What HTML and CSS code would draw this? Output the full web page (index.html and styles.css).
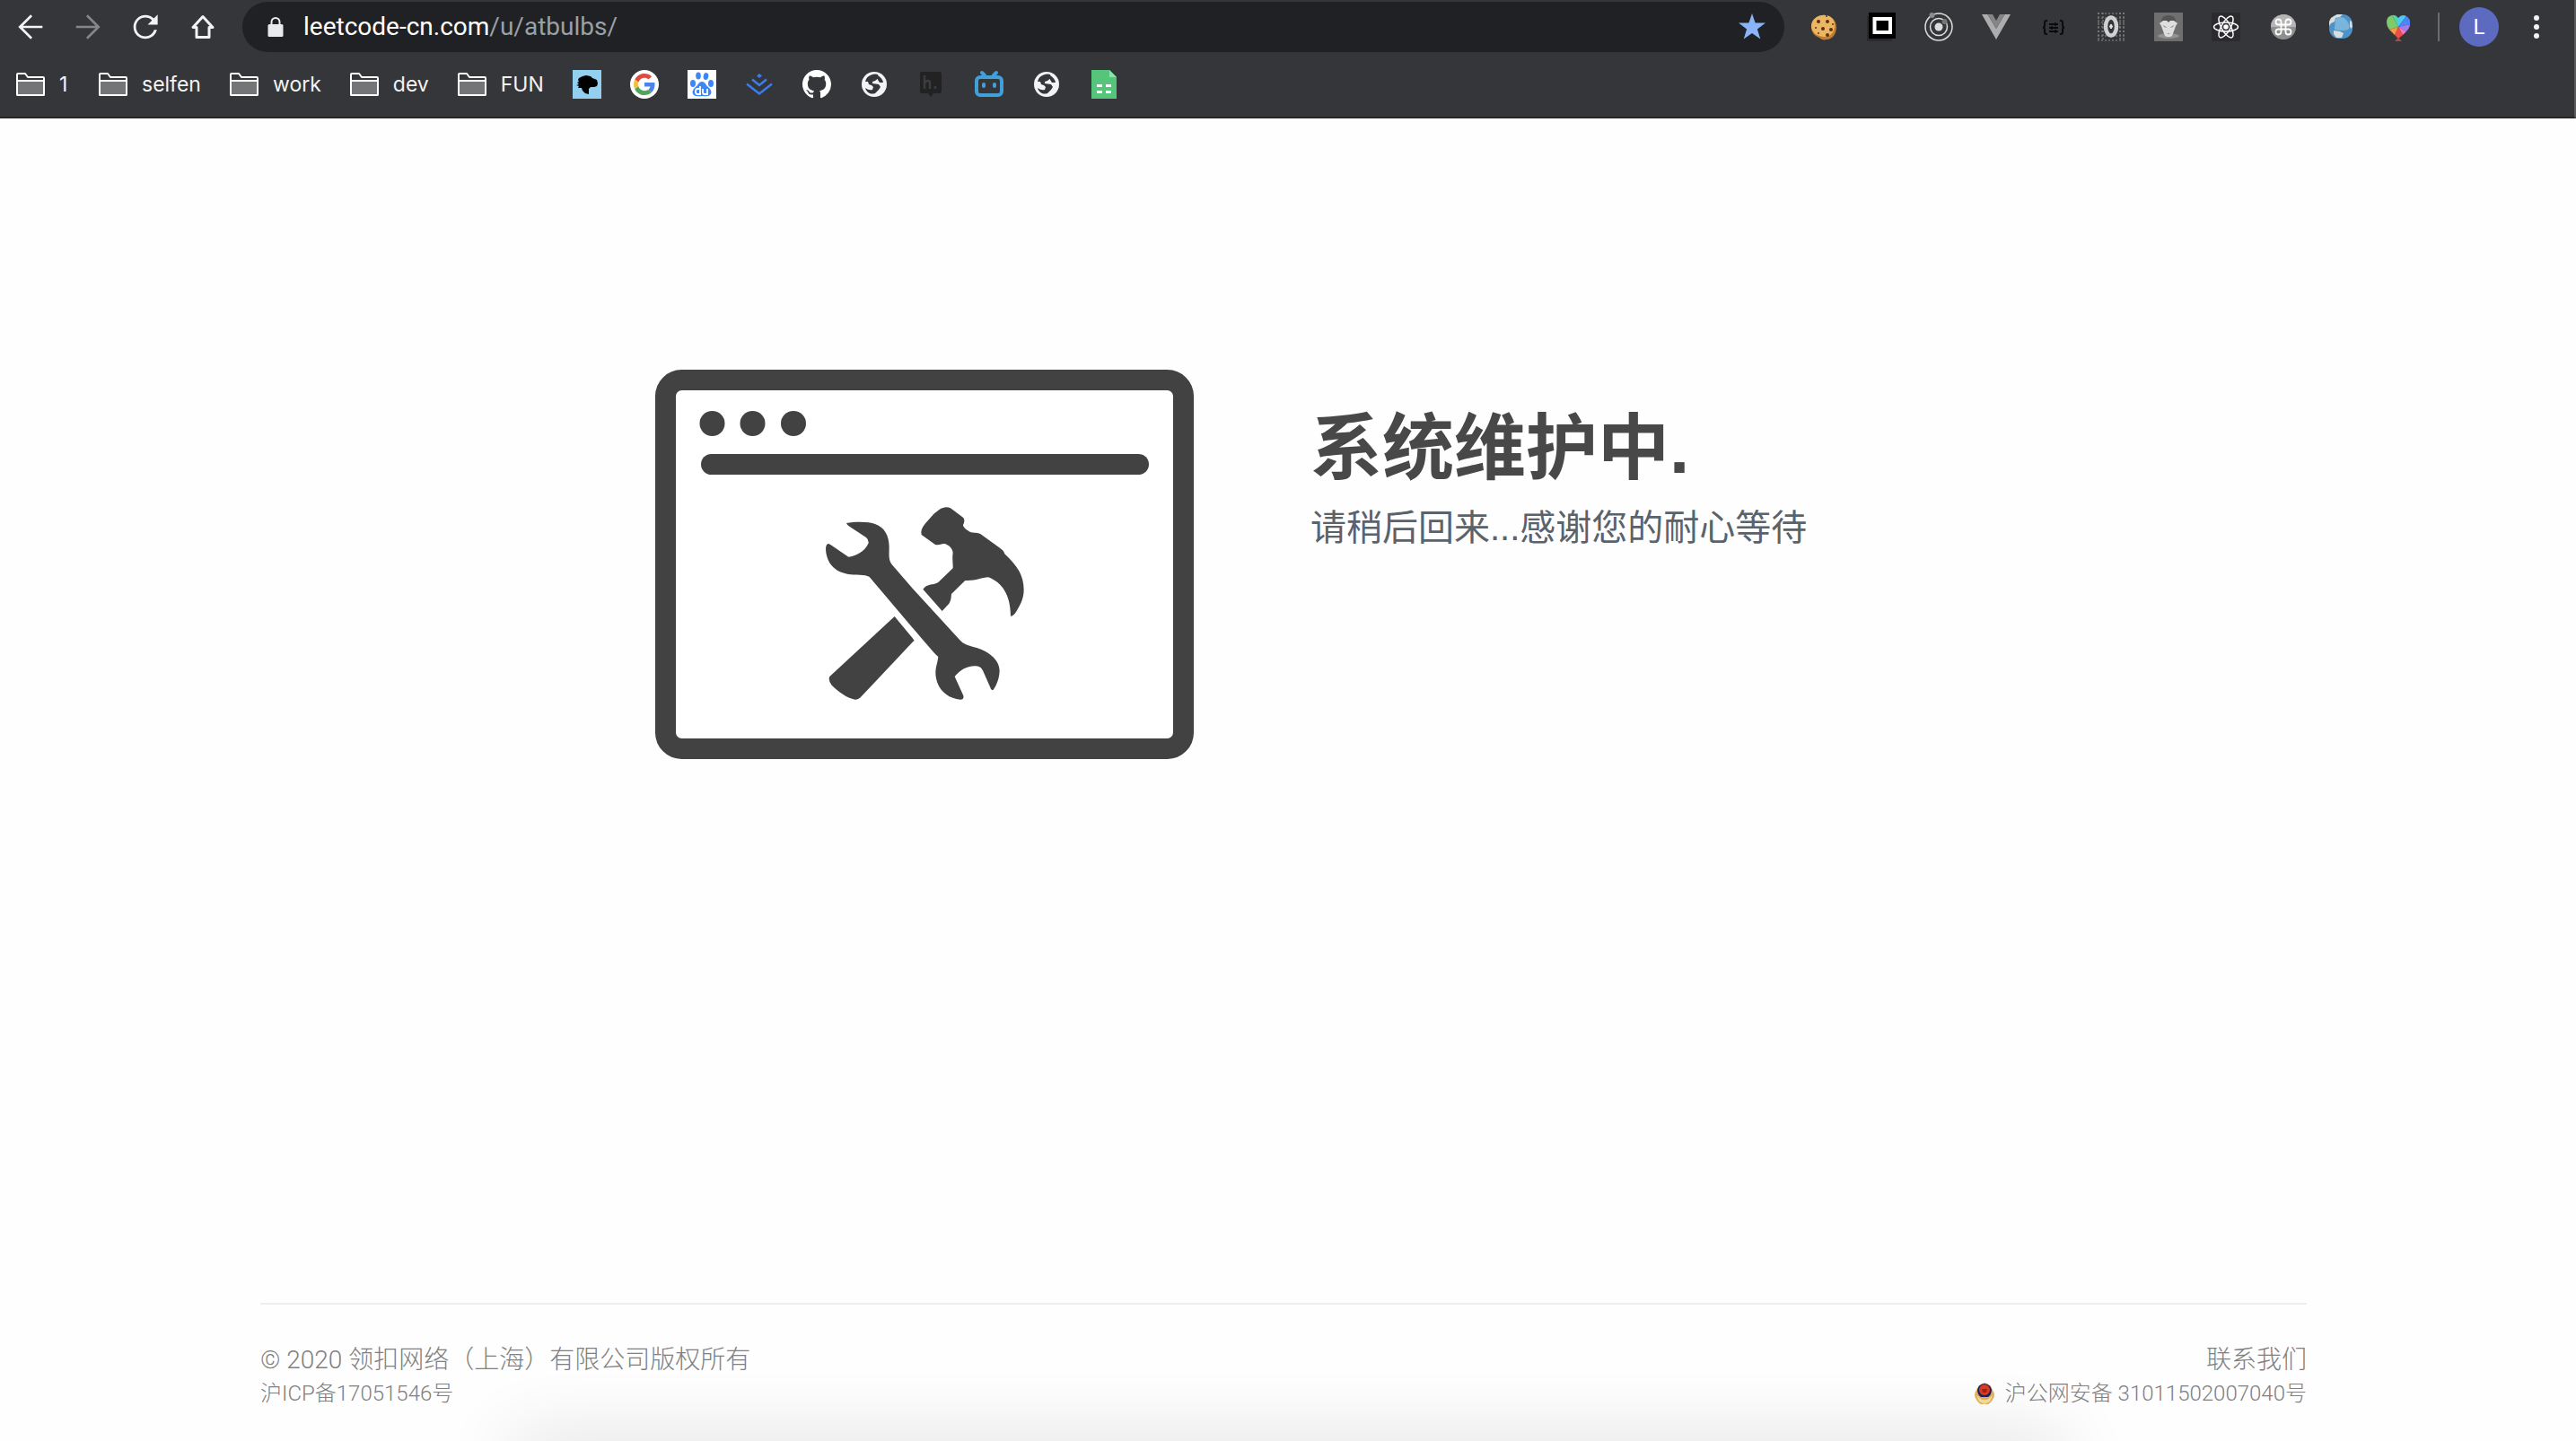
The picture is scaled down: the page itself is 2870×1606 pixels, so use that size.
FILE: index.html
```html
<!DOCTYPE html>
<html lang="zh-CN">
<head>
    <meta charset="utf-8">
    <title>系统维护中</title>
    <link rel="stylesheet" href="styles.css">
</head>
<body>
    <header class="browser">
        <div class="toolbar">
            <button class="nav-button" type="button" aria-label="Back">
                <svg viewBox="0 0 24 24"><path fill="#f1f3f4" d="M20 11.2H6.9l6.3-6.3L12.1 3.800l-8.300 8.200 8.300 8.200 1.100-1.100-6.300-6.300H20z"/></svg>
            </button>
            <button class="nav-button" type="button" aria-label="Forward" disabled>
                <svg viewBox="0 0 24 24"><path fill="#85868a" d="M4 11.200h13.100l-6.300-6.300 1.100-1.100 8.300 8.200-8.300 8.200-1.100-1.100 6.300-6.300H4z"/></svg>
            </button>
            <button class="nav-button" type="button" aria-label="Reload">
                <svg viewBox="0 0 24 24"><path fill="#f1f3f4" d="M17.650 6.350C16.200 4.900 14.210 4 12 4c-4.420 0-7.990 3.580-7.990 8s3.570 8 7.990 8c3.730 0 6.840-2.550 7.730-6h-1.900c-.820 2.500-3.100 4.300-5.830 4.300-3.500 0-6.300-2.800-6.300-6.300s2.800-6.300 6.300-6.300c1.700 0 3.300.7 4.400 1.900L13.500 10.500H20.200V3.800z"/></svg>
            </button>
            <button class="nav-button" type="button" aria-label="Home">
                <svg viewBox="0 0 40 40"><path fill="none" stroke="#f1f3f4" stroke-width="3" stroke-linejoin="round" d="M20 8.500 9 20.500h4V31.500h14V20.500h4z"/></svg>
            </button>

            <div class="address-bar">
                <svg class="lock" viewBox="0 0 18 24"><path fill="#e8eaed" d="M2 9h1.500V6.500a5.500 5.500 0 0 1 11 0V9H16a1.500 1.500 0 0 1 1.500 1.500v11A1.500 1.500 0 0 1 16 23H2a1.500 1.500 0 0 1-1.500-1.500v-11A1.500 1.500 0 0 1 2 9zm3.500 0h7V6.500a3.500 3.500 0 0 0-7 0z"/></svg>
                <div class="url" role="textbox" aria-label="Address" contenteditable="true" spellcheck="false">leetcode-cn.com<span class="url-path">/u/atbulbs/</span></div>
                <button class="star" type="button" aria-label="Bookmark this page">
                    <svg viewBox="0 0 32 32"><path fill="#8ab4f8" d="M16 1l3.600 10.400 11.400.2-9.100 7 3.400 10.800L16 23l-9.300 6.400 3.400-10.800-9.100-7 11.400-.2z"/></svg>
                </button>
            </div>

            <div class="extensions">
                <button class="icon" type="button" aria-label="Cookies">
                    <svg viewBox="0 0 32 32">
                        <path fill="#c87d2c" d="M15 3c8-1 15 5 15 13 0 7-4 14-11 14-3 1-6 0-8-2C5 26 2 21 2 16 2 9 7 3 15 3z"/>
                        <path fill="#ebb765" d="M14 3c8-1 14 4 14 11s-4 13-11 13C9 27 2 22 2 15 2 9 7 4 14 3z"/>
                        <g fill="#5b3212"><circle cx="10" cy="10" r="2"/><circle cx="20" cy="10" r="2"/><circle cx="15" cy="18" r="2"/><circle cx="24" cy="19" r="2"/><circle cx="20" cy="25" r="2"/><circle cx="7" cy="17" r="1"/><circle cx="10" cy="23" r="1"/><circle cx="26" cy="13" r="1"/><circle cx="19" cy="4" r="1"/></g>
                    </svg>
                </button>
                <button class="icon" type="button" aria-label="Frame">
                    <svg viewBox="0 0 32 32"><path fill="#292a2d" d="M0 4h28v28H0z"/><path d="M2 0h30v29H2z"/><path fill="none" stroke="#fff" stroke-width="4" d="M8.500 6h17.500v15H8.500z" transform="translate(0 1)"/></svg>
                </button>
                <button class="icon" type="button" aria-label="Orbit">
                    <svg viewBox="0 0 32 32"><g fill="none" stroke="#dcdcdc" stroke-width="1.500"><circle cx="16" cy="16" r="15"/><circle cx="16" cy="16" r="9.500"/></g><circle cx="16" cy="16" r="4.500" fill="#dcdcdc"/><circle cx="8.500" cy="3" r="3" fill="#8b8b8b"/><circle cx="22.500" cy="10" r="3" fill="#777"/></svg>
                </button>
                <button class="icon" type="button" aria-label="Vue devtools">
                    <svg viewBox="0 0 32 32"><path fill="#adadad" d="M0 2h6.500L16 18l9.500-16H32L16 30z"/><path fill="#858585" d="M6.500 2H12l4 7 4-7h5.500L16 18z"/></svg>
                </button>
                <button class="icon" type="button" aria-label="JSON viewer">
                    <svg viewBox="0 0 32 32"><path fill="none" stroke="#0b0b0b" stroke-width="2" d="M9 9H8q-2 0-2 2v3q0 2.500-2 2.500 2 0 2 2.500v3q0 2 2 2h1M23 9h1q2 0 2 2v3q0 2.500 2 2.500-2 0-2 2.500v3q0 2-2 2h-1M11 13h10M11 17h10M11 21h10"/><path stroke="#0b0b0b" stroke-width="1.500" d="M18 11v4M14 15v4M18 19v4"/></svg>
                </button>
                <button class="icon" type="button" aria-label="Octal">
                    <svg viewBox="0 0 32 32"><g fill="none" stroke="#8d8d8d" stroke-dasharray="2 2"><path d="M1 1h30M1 6h30M1 11h30M1 16h30M1 21h30M1 26h30M1 31h30"/><path d="M2 0v32M30 0v32M7 0v32M26 0v32"/></g><ellipse cx="16" cy="15.500" rx="6" ry="10" fill="#35363a" stroke="#d0d0d0" stroke-width="4.500"/><path stroke="#ddd" stroke-width="2" d="M14 15.500h4M16 13v5"/></svg>
                </button>
                <button class="icon" type="button" aria-label="Mask">
                    <svg viewBox="0 0 32 32"><path fill="#6f6f6f" d="M0 0h32v32H0z"/><ellipse cx="16" cy="26" rx="12" ry="3" fill="#929292"/><path fill="#555" d="M8 10q0-7 8-7t8 7z"/><path fill="#dedede" d="M6 12l4-3h4l2 2 2-2h4l4 3-2 3-1 3-3 8-2 1h-4l-2-1-3-8-1-3z"/><path fill="#888" d="M10 14l5 3-4-1zM22 14l-5 3 4-1zM14 23h4l-2 1z"/></svg>
                </button>
                <button class="icon" type="button" aria-label="React devtools">
                    <svg viewBox="0 0 32 32"><rect width="32" height="32" rx="2" fill="#2b2b2f"/><g fill="none" stroke="#fff" stroke-width="1.500"><ellipse cx="16" cy="16" rx="13.500" ry="5"/><ellipse cx="16" cy="16" rx="13.500" ry="5" transform="rotate(60 16 16)"/><ellipse cx="16" cy="16" rx="13.500" ry="5" transform="rotate(120 16 16)"/></g><circle cx="16" cy="16" r="2.800" fill="#fff"/></svg>
                </button>
                <button class="icon" type="button" aria-label="Shortcuts">
                    <svg viewBox="0 0 32 32"><circle cx="16" cy="16" r="14" fill="#8f8f8f"/><path fill="#b5b5b5" d="M2 16a14 14 0 0 1 28 0z"/><path fill="none" stroke="#fff" stroke-width="1.800" d="M13.500 13.500v-3a3 3 0 1 0-3 3h11a3 3 0 1 0-3-3v11a3 3 0 1 0 3-3h-11a3 3 0 1 0 3 3z"/></svg>
                </button>
                <button class="icon" type="button" aria-label="Globe">
                    <svg viewBox="0 0 32 32"><rect x="3" y="2" width="26" height="27" rx="11" fill="#4c94c8"/><path fill="#79b5dc" d="M10 7q9-5 14 4t-6 9-9-3z"/><path fill="#dcdcda" d="M5 6l7-4h6l-3 3-5 1-1 4-4 2-2 3v-5zM8 20l7 1 4 2-2 5h-6l-3-4zM26 9l2 1 1 6-2 2-1-3z"/></svg>
                </button>
                <button class="icon" type="button" aria-label="Colour heart">
                    <svg viewBox="0 0 32 32"><path fill="#7fcb6c" d="M16 16 9 3Q3 4 3 11q0 4 3 8z"/><path fill="#53d3a6" d="M16 16V6q-3-4-7-3z"/><path fill="#4fc8f4" d="M16 16V6q4-5 9-2z"/><path fill="#4a86f5" d="M16 16l9-12q5 3 4 9z"/><path fill="#a57bf0" d="M16 16l13-3q0 4-4 8z"/><path fill="#f178c5" d="M16 16l9 5-4 4z"/><path fill="#ef4d45" d="M16 16l5 9-5 4-4-4z"/><path fill="#f39a4b" d="M16 16l-4 9-6-6z"/><path fill="#b44a3f" d="M16 28l4 4h-8z"/></svg>
                </button>
            </div>

            <span class="divider"></span>
            <button class="avatar" type="button">L</button>
            <button class="nav-button" type="button" aria-label="Menu">
                <svg viewBox="0 0 40 40" fill="#f1f3f4"><circle cx="20" cy="10" r="3"/><circle cx="20" cy="20" r="3"/><circle cx="20" cy="30" r="3"/></svg>
            </button>
        </div>

        <svg class="symbols" aria-hidden="true">
            <symbol id="folder" viewBox="0 0 32 26"><path fill="#35363a" stroke="#fff" stroke-width="2" stroke-linejoin="round" d="M1 24V2q0-1 1-1h8l3 4h17q1 0 1 1v18q0 1-1 1H2q-1 0-1-1z"/><path fill="#747577" stroke="#fff" stroke-width="2" d="M1 9h30v15q0 1-1 1H2q-1 0-1-1z"/></symbol>
            <symbol id="globe" viewBox="0 0 32 32"><circle cx="16" cy="16" r="14" fill="#f1f3f4"/><path fill="#35363a" d="M6 13q1-6 8-8 3-1 6 0l1 4-4 3-3 1v2l7 1 2 3-2 3-4 4q-3 1-6 0-4-2-5-6 4 3 8 2l1-3-2-2-3-1-1-3zM20 6q5 3 6 8h-4l-2-3z"/></symbol>
        </svg>

        <nav class="bookmarks">
            <a class="bookmark" href="#"><svg class="folder"><use href="#folder"/></svg>1</a>
            <a class="bookmark" href="#"><svg class="folder"><use href="#folder"/></svg>selfen</a>
            <a class="bookmark" href="#"><svg class="folder"><use href="#folder"/></svg>work</a>
            <a class="bookmark" href="#"><svg class="folder"><use href="#folder"/></svg>dev</a>
            <a class="bookmark" href="#"><svg class="folder"><use href="#folder"/></svg>FUN</a>
            <a class="icon" href="#" aria-label="Lion">
                <svg viewBox="0 0 32 32"><path fill="#93cfef" d="M0 0h32v32H0z"/><path d="M7 9l4-2 4-1 5 1 2 2 5 2 1 4-1 3-3 1-4 0-2 2 0 6-4-1-3-3-1-3-4 0 1-2-3-1 3-1-2-2 2-1-1-2z"/></svg>
            </a>
            <a class="icon" href="#" aria-label="Google">
                <svg viewBox="0 0 32 32"><circle cx="16" cy="16" r="16" fill="#fff"/><g transform="translate(4 4) scale(.5)"><path fill="#dd4b3e" d="M24 9.500c3.540 0 6.710 1.220 9.210 3.600l6.850-6.850C35.900 2.380 30.470 0 24 0 14.620 0 6.510 5.380 2.560 13.220l7.980 6.190C12.430 13.720 17.740 9.500 24 9.500z"/><path fill="#4b83ec" d="M46.980 24.550c0-1.570-.15-3.090-.38-4.550H24v9.020h12.940c-.58 2.960-2.260 5.480-4.780 7.180l7.730 6c4.510-4.180 7.090-10.360 7.090-17.650z"/><path fill="#f6bf3b" d="M10.530 28.590c-.48-1.450-.76-2.990-.76-4.590s.27-3.140.76-4.590l-7.980-6.190C.92 16.460 0 20.120 0 24c0 3.880.92 7.540 2.560 10.780z"/><path fill="#4fa55a" d="M24 48c6.480 0 11.930-2.130 15.890-5.810l-7.730-6c-2.150 1.450-4.920 2.300-8.160 2.300-6.260 0-11.570-4.220-13.470-9.910l-7.980 6.190C6.510 42.620 14.620 48 24 48z"/></g></svg>
            </a>
            <a class="icon" href="#" aria-label="Baidu">
                <svg viewBox="0 0 32 32"><path fill="#fff" d="M0 0h32v32H0z"/><g fill="#3c86f7"><ellipse cx="6" cy="15" rx="3" ry="4"/><ellipse cx="12" cy="6.500" rx="2.800" ry="4"/><ellipse cx="20.500" cy="7" rx="2.800" ry="4" transform="rotate(10 20 7)"/><ellipse cx="26" cy="15" rx="3" ry="4"/><path d="M16 13q3 0 5 4l4 4q3 4 0 7-2 2-9 1-7 1-9-1-3-3 0-7l4-4q2-4 5-4z"/></g><path fill="none" stroke="#fff" stroke-width="1.800" d="M14 18v9h-3q-2 0-2-3t2-3h3M17 21v4q0 2 2 2h3v-6"/></svg>
            </a>
            <a class="icon" href="#" aria-label="Juejin">
                <svg viewBox="0 0 32 32"><path fill="#3a7df0" d="M16 4l3 2.500L16 9l-3-2.500z"/><path fill="none" stroke="#3a7df0" stroke-width="2.500" d="M8 10.500l8 6.500 8-6.500M2 15.500l14 11 14-11"/></svg>
            </a>
            <a class="icon" href="#" aria-label="GitHub">
                <svg viewBox="0 0 16 16"><path fill="#fff" d="M8 0C3.580 0 0 3.580 0 8c0 3.540 2.290 6.530 5.470 7.590.4.07.55-.17.55-.38 0-.19-.01-.82-.01-1.490-2.010.37-2.530-.49-2.690-.94-.09-.23-.48-.94-.82-1.130-.28-.15-.68-.52-.01-.53.63-.01 1.080.58 1.230.82.72 1.210 1.870.87 2.330.66.07-.52.28-.87.51-1.070-1.780-.2-3.640-.89-3.640-3.950 0-.87.31-1.590.82-2.150-.08-.2-.36-1.020.08-2.120 0 0 .67-.21 2.200.82.64-.18 1.320-.27 2-.27.68 0 1.360.09 2 .27 1.530-1.040 2.200-.82 2.200-.82.44 1.100.16 1.920.08 2.120.51.56.82 1.270.82 2.150 0 3.070-1.870 3.750-3.650 3.950.29.25.54.73.54 1.480 0 1.070-.01 1.930-.01 2.200 0 .21.15.46.55.38A8.013 8.013 0 0 0 16 8c0-4.420-3.580-8-8-8z"/></svg>
            </a>
            <a class="icon" href="#" aria-label="Site"><svg><use href="#globe"/></svg></a>
            <a class="icon" href="#" aria-label="Hypothesis">
                <svg viewBox="0 0 32 32"><path fill="#222" d="M5 2h20q2 0 2 2v20q0 2-2 2h-7l-3 4-3-4H5q-2 0-2-2V4q0-2 2-2z"/><path fill="none" stroke="#3b3c40" stroke-width="2.500" d="M8 6v15M8 15q1-3 4-3 2 0 2 3v6M20 18v3"/></svg>
            </a>
            <a class="icon" href="#" aria-label="Bilibili">
                <svg viewBox="0 0 32 32"><g fill="none" stroke="#419fd9" stroke-width="4" stroke-linecap="round"><rect x="2" y="8" width="28" height="20" rx="4"/><path d="M8 3l3 3M24 3l-3 3M10 16v2M22 16v2"/></g></svg>
            </a>
            <a class="icon" href="#" aria-label="Site"><svg><use href="#globe"/></svg></a>
            <a class="icon" href="#" aria-label="Sheets">
                <svg viewBox="0 0 32 32"><path fill="#56c57c" d="M2 0h20l8 8v24H2z"/><path fill="#8ae5a8" d="M22 0l8 8h-8z"/><path fill="#fff" d="M8 16h6v3H8zM18 16h6v3h-6zM8 23h6v3H8zM18 23h6v3h-6z"/></svg>
            </a>
        </nav>
    </header>

    <div class="page">
        <main class="notice">
            <svg class="picture" viewBox="0 0 600 434" aria-hidden="true">
                <rect x="11.500" y="11.500" width="577" height="411" rx="18" fill="#fff" stroke="#424242" stroke-width="23"/>
                <g fill="#424242">
                    <circle cx="63.500" cy="60" r="14"/>
                    <circle cx="108.500" cy="60" r="14"/>
                    <circle cx="154" cy="60" r="14"/>
                    <rect x="51" y="94" width="499" height="23" rx="11.500"/>
                    <g transform="translate(170 138) scale(.3333)">
                        <!-- wrench -->
                        <path d="M129 99C160 94 205 94 225 102C258 114 271 142 272 178C272 200 269 223 280 236L350 317L508 490C520 504 535 508 556 514C603 526 640 555 641 592C641 618 630 643 620 656Q616 660 612 653L586 594C580 582 574 577 557 577C530 577 508 592 491 612L520 676Q523 689 510 689C460 684 427 648 427 598C427 580 435 562 436 546C419 531 400 507 385 490L206 279C190 268 160 275 132 269C90 262 61 232 60 184Q61 168 70 168L79 173L136 212C160 210 190 195 203 166Q204 154 195 147L137 109Q131 105 129 99z"/>
                        <!-- hammer -->
                        <path d="M290 411L356 491L176 682Q168 690 158 689C130 684 100 661 80 641Q67 624 73 612z"/>
                        <path d="M385 320L449 393L468 373C479 362 479 348 480 336L526 291C560 293 580 281 604 280C650 298 678 340 678 410Q686 412 698 393C712 370 722 350 722 322C722 274 701 243 658 202C656 193 650 188 640 181L586 142C570 128 560 134 546 130C530 123 519 112 519 105C525 95 524 85 519 80L477 49C455 40 440 53 420 70L392 101C381 114 377 125 380 138L425 170C440 177 447 164 463 170C475 175 484 185 485 198C482 220 486 235 485 250L436 297C420 307 400 300 385 320z"/>
                    </g>
                </g>
            </svg>
            <div class="message">
                <h1>系统维护中.</h1>
                <p>请稍后回来...感谢您的耐心等待</p>
            </div>
        </main>

        <footer class="footer">
            <div>
                <p class="copyright">© 2020 领扣网络（上海）有限公司版权所有</p>
                <a class="record" href="#">沪ICP备17051546号</a>
            </div>
            <div class="footer-right">
                <a class="contact" href="#">联系我们</a>
                <a class="record" href="#">
                    <svg class="badge" viewBox="0 0 22 24"><path fill="#e3b25c" d="M11 0q7 2 9 8 4 6 0 11-2 4-5 5H7q-3-1-5-5-4-5 0-11 2-6 9-8z"/><path fill="#f4dc9c" d="M2 14l6 5h6l6-5-3 7-6 3-6-3z"/><path fill="#1c2160" d="M11 1q7 1 8 7 0 5-4 8H7q-4-3-4-8 1-6 8-7z"/><circle cx="11" cy="8" r="6" fill="#dc3a22"/><path fill="#a51f16" d="M8 7h6l-1 4H9z"/></svg>
                    沪公网安备 31011502007040号
                </a>
            </div>
        </footer>
    </div>
    <div class="dock-shadow"></div>
</body>
</html>
```

FILE: styles.css
```css
* {
    box-sizing: border-box;
}

body {
    display: flex;
    flex-direction: column;
    min-height: 100vh;
    margin: 0;
    background-color: #fefefe;
    font-family: Roboto, "Noto Sans CJK SC", sans-serif;
}

a {
    color: inherit;
    text-decoration: none;
}

button {
    padding: 0;
    border: none;
    background: none;
    cursor: pointer;
}

svg {
    display: block;
}

/* browser bar */
.browser {
    background-color: #35363a;
    border-right: 2px solid #5b5b5e;
    border-bottom: 2px solid #2a2627;
    color: #f1f3f4;
}

.toolbar {
    display: flex;
    align-items: center;
    height: 60px;
    padding: 0 22px 0 14px;
}

.nav-button {
    flex: none;
    width: 40px;
    height: 40px;
    margin-right: 24px;
}

.nav-button:last-child {
    margin-right: 0;
}

.nav-button svg {
    width: 40px;
    height: 40px;
}

.address-bar {
    display: flex;
    flex: 1;
    align-items: center;
    height: 56px;
    padding: 0 20px 0 28px;
    border-radius: 28px;
    background-color: #202124;
}

.lock {
    width: 18px;
    height: 24px;
    margin-right: 22px;
}

.url {
    flex: 1;
    color: #fff;
    font-size: 28px;
    line-height: 40px;
    outline: none;
}

.url-path {
    color: #9aa0a6;
}

.icon,
.icon svg,
.star,
.star svg {
    flex: none;
    width: 32px;
    height: 32px;
}

.extensions {
    display: flex;
    gap: 32px;
    margin: 0 28px;
}

.divider {
    width: 2px;
    height: 32px;
    background-color: #6b6c6f;
}

.avatar {
    width: 44px;
    height: 44px;
    margin: 0 22px;
    border-radius: 50%;
    background-color: #5c6bc0;
    color: #fff;
    font-family: inherit;
    font-size: 24px;
}

.symbols {
    position: absolute;
    width: 0;
    height: 0;
}

.bookmarks {
    display: flex;
    align-items: center;
    gap: 32px;
    height: 70px;
    padding: 0 18px 2px;
}

.bookmark {
    display: flex;
    align-items: center;
    gap: 16px;
    min-width: 60px;
    font-family: Inter, sans-serif;
    font-size: 23px;
    line-height: 32px;
}

.folder {
    width: 32px;
    height: 26px;
}

/* maintenance page */
.page {
    display: flex;
    flex: 1;
    flex-direction: column;
    width: 100%;
    max-width: 2290px;
    margin: 0 auto;
    padding-right: 10px;
}

.notice {
    display: flex;
    gap: 130px;
    padding: 280px 0 0 440px;
}

.picture {
    flex: none;
    width: 600px;
}

.message {
    padding-top: 44px;
    font-family: "Liberation Sans", "Noto Sans CJK SC", sans-serif;
}

h1 {
    margin: 0;
    color: #484848;
    font-size: 80px;
    line-height: 88px;
}

.message p {
    margin: 14px 0 0;
    color: #5a626b;
    font-size: 40px;
    line-height: 60px;
}

.footer {
    display: flex;
    justify-content: space-between;
    margin-top: auto;
    padding: 44px 0 34px;
    border-top: 2px solid #eee;
    color: #808080;
    font-weight: 300;
}

.footer p {
    margin: 0;
}

.footer-right {
    display: flex;
    flex-direction: column;
    align-items: flex-end;
}

.copyright,
.contact {
    font-size: 28px;
    line-height: 36px;
}

.record {
    display: flex;
    align-items: center;
    font-size: 24px;
    line-height: 38px;
}

.badge {
    width: 22px;
    height: 24px;
    margin-right: 12px;
}

/* soft shadow along the bottom edge of the screen */
.dock-shadow {
    position: fixed;
    right: 570px;
    bottom: -40px;
    left: 570px;
    height: 40px;
    box-shadow: 0 0 80px rgba(0, 0, 0, 0.16);
    pointer-events: none;
}
```
